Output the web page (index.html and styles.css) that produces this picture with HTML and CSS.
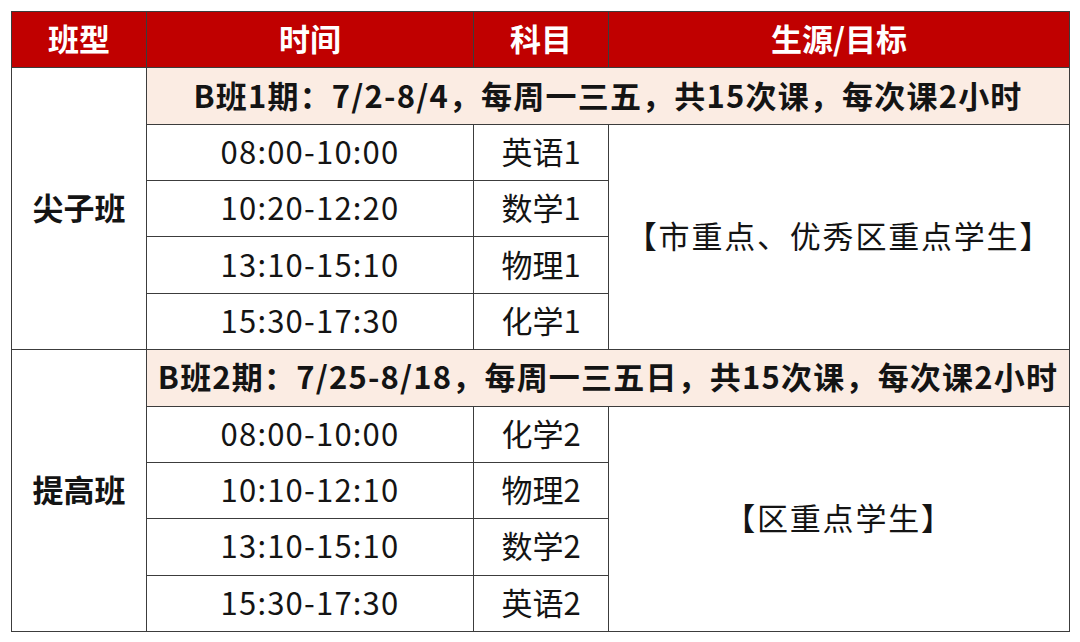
FILE: index.html
```html
<!DOCTYPE html>
<html lang="zh">
<head>
<meta charset="utf-8">
<link rel="stylesheet" href="styles.css">
</head>
<body>
<div class="wrap">
<table class="sched">
  <colgroup>
    <col class="c1"><col class="c2"><col class="c3"><col class="c4">
  </colgroup>
  <thead>
    <tr class="head"><th>班型</th><th>时间</th><th>科目</th><th>生源/目标</th></tr>
  </thead>
  <tbody>
    <tr><td class="type" rowspan="5">尖子班</td><td class="period" colspan="3">B班1期：7/2-8/4，每周一三五，共15次课，每次课2小时</td></tr>
    <tr><td class="time">08:00-10:00</td><td>英语1</td><td class="target" rowspan="4">【市重点、优秀区重点学生】</td></tr>
    <tr><td class="time">10:20-12:20</td><td>数学1</td></tr>
    <tr><td class="time">13:10-15:10</td><td>物理1</td></tr>
    <tr><td class="time">15:30-17:30</td><td>化学1</td></tr>
    <tr><td class="type" rowspan="5">提高班</td><td class="period" colspan="3">B班2期：7/25-8/18，每周一三五日，共15次课，每次课2小时</td></tr>
    <tr><td class="time">08:00-10:00</td><td>化学2</td><td class="target" rowspan="4">【区重点学生】</td></tr>
    <tr><td class="time">10:10-12:10</td><td>物理2</td></tr>
    <tr><td class="time">13:10-15:10</td><td>数学2</td></tr>
    <tr><td class="time">15:30-17:30</td><td>英语2</td></tr>
  </tbody>
</table>
</div>
</body>
</html>
```

FILE: styles.css
```css
html, body {
  margin: 0;
  padding: 0;
  background: #ffffff;
}
.wrap {
  padding: 11px 11px 0 11px;
}
.sched {
  width: 1058px;
  border-collapse: collapse;
  table-layout: fixed;
  font-family: "Microsoft YaHei", "Noto Sans CJK SC", sans-serif;
  font-size: 31px;
  color: #141414;
}
.c1 { width: 135px; }
.c2 { width: 327px; }
.c3 { width: 135px; }
.c4 { width: 461px; }
.sched th, .sched td {
  border: 1.5px solid #3c3c3c;
  text-align: center;
  vertical-align: middle;
  padding: 0 0 4px 0;
  height: 51.36px;
  line-height: 1;
  white-space: nowrap;
}
.head th {
  background: #c00000;
  color: #ffffff;
  font-weight: 700;
}
.type {
  font-weight: 700;
}
.period {
  background: #fbece3;
  font-weight: 700;
  letter-spacing: 1.2px;
}
.time {
  letter-spacing: 1.2px;
}
.target {
  letter-spacing: 1.8px;
}
```
